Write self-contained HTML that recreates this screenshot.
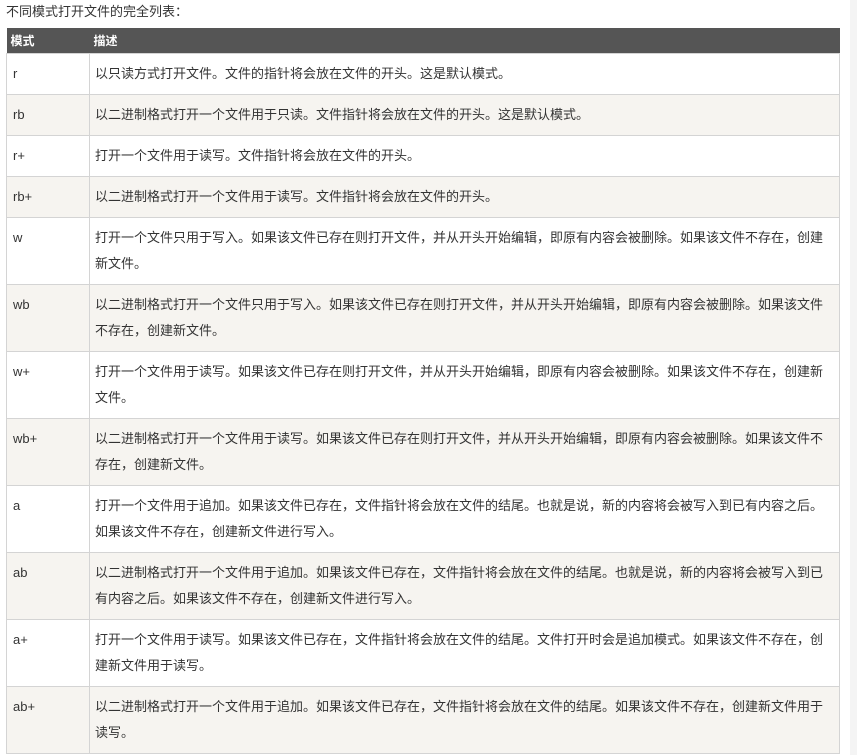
<!DOCTYPE html>
<html><head><meta charset="utf-8"><style>
body{margin:0;background:#fff;font-family:"Liberation Sans","Noto Sans CJK SC",sans-serif;font-size:13px;color:#333;width:857px;height:755px;overflow:hidden;position:relative}
.edge{position:absolute;left:850px;top:0;width:7px;height:755px;background:#f4f4f4}
p{margin:0;position:absolute;left:6px;top:3px;font-size:13px;line-height:18px}
table{position:absolute;left:6px;top:28px;width:834px;border-collapse:collapse;table-layout:fixed}
th{background:#555;color:#fff;font-weight:bold;text-align:left;height:24px;padding:0 4px;font-size:12px;border:0;box-sizing:border-box}
td{border:1px solid #d4d4d4;padding:7px 5px;line-height:26px;vertical-align:top}
tr.e td{background:#f6f4f0}
td:first-child{padding-left:6px}
</style></head><body><div class="edge"></div>
<p>不同模式打开文件的完全列表：</p>
<table><colgroup><col style="width:83px"><col></colgroup>
<tr style="height:25px"><th>模式</th><th>描述</th></tr>
<tr><td>r</td><td>以只读方式打开文件。文件的指针将会放在文件的开头。这是默认模式。</td></tr>
<tr class="e"><td>rb</td><td>以二进制格式打开一个文件用于只读。文件指针将会放在文件的开头。这是默认模式。</td></tr>
<tr><td>r+</td><td>打开一个文件用于读写。文件指针将会放在文件的开头。</td></tr>
<tr class="e"><td>rb+</td><td>以二进制格式打开一个文件用于读写。文件指针将会放在文件的开头。</td></tr>
<tr><td>w</td><td>打开一个文件只用于写入。如果该文件已存在则打开文件，并从开头开始编辑，即原有内容会被删除。如果该文件不存在，创建新文件。</td></tr>
<tr class="e"><td>wb</td><td>以二进制格式打开一个文件只用于写入。如果该文件已存在则打开文件，并从开头开始编辑，即原有内容会被删除。如果该文件不存在，创建新文件。</td></tr>
<tr><td>w+</td><td>打开一个文件用于读写。如果该文件已存在则打开文件，并从开头开始编辑，即原有内容会被删除。如果该文件不存在，创建新文件。</td></tr>
<tr class="e"><td>wb+</td><td>以二进制格式打开一个文件用于读写。如果该文件已存在则打开文件，并从开头开始编辑，即原有内容会被删除。如果该文件不存在，创建新文件。</td></tr>
<tr><td>a</td><td>打开一个文件用于追加。如果该文件已存在，文件指针将会放在文件的结尾。也就是说，新的内容将会被写入到已有内容之后。如果该文件不存在，创建新文件进行写入。</td></tr>
<tr class="e"><td>ab</td><td>以二进制格式打开一个文件用于追加。如果该文件已存在，文件指针将会放在文件的结尾。也就是说，新的内容将会被写入到已有内容之后。如果该文件不存在，创建新文件进行写入。</td></tr>
<tr><td>a+</td><td>打开一个文件用于读写。如果该文件已存在，文件指针将会放在文件的结尾。文件打开时会是追加模式。如果该文件不存在，创建新文件用于读写。</td></tr>
<tr class="e"><td>ab+</td><td>以二进制格式打开一个文件用于追加。如果该文件已存在，文件指针将会放在文件的结尾。如果该文件不存在，创建新文件用于读写。</td></tr>
</table></body></html>
